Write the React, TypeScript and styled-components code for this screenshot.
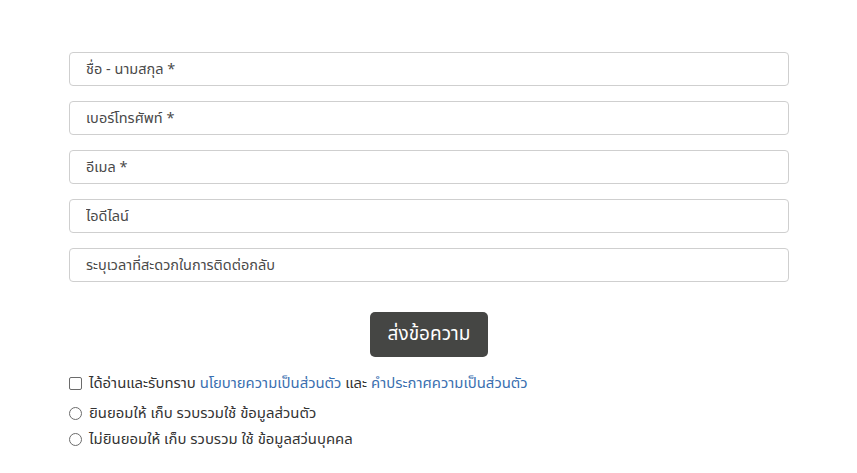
import React from "react";
import styled, { createGlobalStyle } from "styled-components";

const Global = createGlobalStyle`
  html, body { margin: 0; padding: 0; background: #fff; }
  body { font-family: "Noto Sans Thai", "Noto Sans Thai UI", "Noto Sans", "DejaVu Sans", sans-serif; }
  * { box-sizing: border-box; }
`;

const Page = styled.div`
  width: 857px;
  height: 473px;
  padding-top: 52px;
  display: flex;
  justify-content: center;
`;

const Form = styled.form`
  width: 720px;
  display: flex;
  flex-direction: column;
  margin-left: 1px;
`;

const Fields = styled.div`
  display: flex;
  flex-direction: column;
  gap: 15px;
`;

const Input = styled.input`
  width: 100%;
  height: 34px;
  border: 1px solid #cfcfcf;
  border-radius: 4px;
  padding: 1px 16px 0;
  font-family: inherit;
  font-size: 14.5px;
  color: #333;
  outline: none;
  &::placeholder { color: #4a4a4a; }
`;

const ButtonRow = styled.div`
  display: flex;
  justify-content: center;
  margin-top: 30px;
`;

const Submit = styled.button`
  width: 118px;
  height: 45px;
  background: #454644;
  color: #fff;
  border: none;
  border-radius: 5px;
  font-family: inherit;
  font-size: 19px;
  padding: 0;
`;

const Options = styled.div`
  display: flex;
  flex-direction: column;
  margin-top: 15px;
`;

const OptionRow = styled.label<{ $gap?: number }>`
  display: flex;
  align-items: center;
  gap: 7px;
  height: 22px;
  margin-top: ${p => p.$gap ?? 0}px;
  font-size: 14.9px;
  color: #333;
`;

const Check = styled.span`
  width: 13px;
  height: 13px;
  border: 1px solid #6b6b6b;
  border-radius: 2px;
  flex: none;
`;

const Radio = styled.span`
  width: 13px;
  height: 13px;
  border: 1px solid #6b6b6b;
  border-radius: 50%;
  flex: none;
`;

const Link = styled.a`
  color: #3a6fb0;
  text-decoration: none;
`;

export default function App() {
  return (
    <>
      <Global />
      <Page>
        <Form onSubmit={e => e.preventDefault()}>
          <Fields>
            <Input placeholder="ชื่อ - นามสกุล *" />
            <Input placeholder="เบอร์โทรศัพท์ *" />
            <Input placeholder="อีเมล *" />
            <Input placeholder="ไอดีไลน์" />
            <Input placeholder="ระบุเวลาที่สะดวกในการติดต่อกลับ" />
          </Fields>
          <ButtonRow>
            <Submit type="submit">ส่งข้อความ</Submit>
          </ButtonRow>
          <Options>
            <OptionRow>
              <Check />
              <span>
                ได้อ่านและรับทราบ <Link href="#">นโยบายความเป็นส่วนตัว</Link> และ{" "}
                <Link href="#">คำประกาศความเป็นส่วนตัว</Link>
              </span>
            </OptionRow>
            <OptionRow $gap={8}>
              <Radio />
              <span>ยินยอมให้ เก็บ รวบรวมใช้ ข้อมูลส่วนตัว</span>
            </OptionRow>
            <OptionRow $gap={4}>
              <Radio />
              <span>ไม่ยินยอมให้ เก็บ รวบรวม ใช้ ข้อมูลสว่นบุคคล</span>
            </OptionRow>
          </Options>
        </Form>
      </Page>
    </>
  );
}
